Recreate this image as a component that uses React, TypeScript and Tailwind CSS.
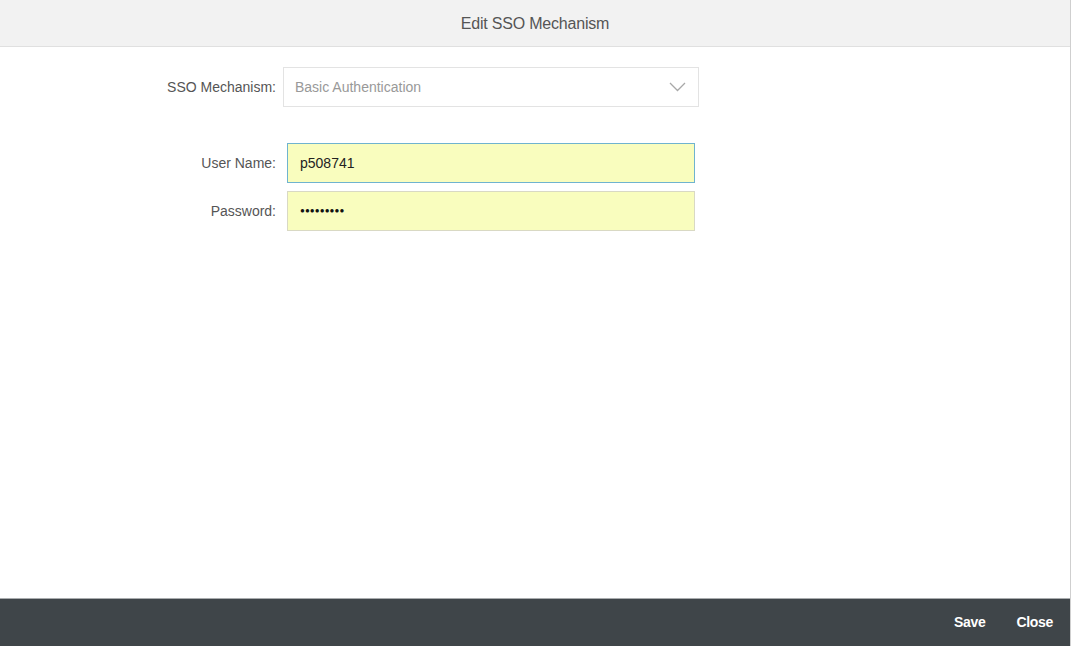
export default function App() {
  return (
    <div className="w-[1071px] h-[646px] flex flex-col bg-white border-r border-[#cfcfcf] font-['Liberation_Sans',Arial,sans-serif] overflow-hidden">
      {/* Header */}
      <div className="h-[47px] shrink-0 bg-[#f2f2f2] border-b border-[#e0e0e0] flex items-center justify-center pt-[1px]">
        <span className="text-[16px] tracking-[-0.2px] text-[#555]">Edit SSO Mechanism</span>
      </div>

      {/* Form */}
      <div className="flex-1 pt-[20px]">
        <div className="flex items-center h-[40px]">
          <label className="w-[276px] text-right text-[14px] text-[#555]">SSO Mechanism:</label>
          <div className="ml-[7px] w-[416px] h-[40px] border border-[#e3e3e3] flex items-center justify-between pl-[11px] pr-[12px]">
            <span className="text-[14px] text-[#999]">Basic Authentication</span>
            <svg width="17" height="10" viewBox="0 0 17 10" fill="none">
              <path d="M1 1l7.5 7.5L16 1" stroke="#a8a8a8" strokeWidth="1.3" />
            </svg>
          </div>
        </div>

        <div className="flex items-center h-[40px] mt-[36px]">
          <label className="w-[276px] text-right text-[14px] text-[#555]">User Name:</label>
          <div className="ml-[11px] w-[408px] h-[40px] bg-[#f9fdbe] border border-[#6fb3cf] flex items-center pl-[12px]">
            <span className="text-[14px] text-[#222]">p508741</span>
          </div>
        </div>

        <div className="flex items-center h-[40px] mt-[8px]">
          <label className="w-[276px] text-right text-[14px] text-[#555]">Password:</label>
          <div className="ml-[11px] w-[408px] h-[40px] bg-[#f9fdbe] border border-[#d9d9c4] flex items-center pl-[12px]">
            <span className="text-[8px] tracking-[0.1px] text-[#111]">●●●●●●●●●</span>
          </div>
        </div>
      </div>

      {/* Footer */}
      <div className="h-[48px] shrink-0 bg-[#3f4549] border-t border-[#a9acae] flex items-center justify-end gap-[31px] pr-[17px]">
        <button className="text-[14px] font-bold tracking-[-0.3px] text-white">Save</button>
        <button className="text-[14px] font-bold tracking-[-0.3px] text-white">Close</button>
      </div>
    </div>
  );
}
